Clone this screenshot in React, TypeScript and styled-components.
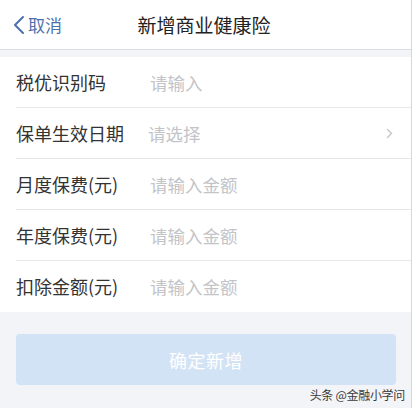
import React from "react";
import styled, { createGlobalStyle } from "styled-components";

const GlobalStyle = createGlobalStyle`
    html, body {
        margin: 0;
        padding: 0;
        background: #ffffff;
    }
    body {
        font-family: "Noto Sans CJK SC", "Noto Sans", sans-serif;
    }
`;

const Page = styled.div`
    width: 411px;
    height: 408px;
    border-right: 1px solid #d6d7db;
    background: #f3f4f8;
    display: flex;
    flex-direction: column;
    overflow: hidden;
`;

const Header = styled.div`
    height: 49px;
    flex-shrink: 0;
    background: #ffffff;
    border-bottom: 1px solid #dcdde2;
    display: grid;
    grid-template-columns: 100px 1fr 100px;
    align-items: center;
`;

const BackButton = styled.div`
    display: flex;
    align-items: center;
    gap: 3px;
    padding-left: 13px;
    color: #4a71ad;
    font-size: 17px;
`;

const Title = styled.div`
    text-align: center;
    font-size: 19px;
    color: #222222;
    margin-left: -3px;
`;

const List = styled.div`
    margin-top: 7px;
    background: #ffffff;
    display: flex;
    flex-direction: column;
`;

const Row = styled.div<{ $last?: boolean }>`
    height: 50px;
    margin-left: 16px;
    border-bottom: 1px solid ${(p) => (p.$last ? "transparent" : "#e6e7ea")};
    display: flex;
    align-items: center;
`;

const Label = styled.div<{ $width: number }>`
    width: ${(p) => p.$width}px;
    flex-shrink: 0;
    font-size: 18px;
    color: #333333;
`;

const Placeholder = styled.div`
    flex: 1;
    font-size: 17.5px;
    color: #c3c4c8;
`;

const Chevron = styled.div`
    width: 24px;
    display: flex;
    justify-content: center;
    margin-right: 10px;
`;

const Footer = styled.div`
    padding: 22px 15px 0 16px;
    display: flex;
    flex-direction: column;
`;

const SubmitButton = styled.div`
    height: 51px;
    border-radius: 4px;
    background: #d3e3f6;
    color: #ffffff;
    font-size: 18px;
    display: flex;
    align-items: center;
    justify-content: center;
    letter-spacing: 0.5px;
`;

const Watermark = styled.div`
    align-self: flex-end;
    margin-top: 1px;
    margin-right: -9px;
    font-size: 12px;
    color: #3a3a3a;
    letter-spacing: -0.3px;
`;

type Field = {
    label: string;
    placeholder: string;
    width: number;
    arrow?: boolean;
};

const fields: Field[] = [
    { label: "税优识别码", placeholder: "请输入", width: 134 },
    { label: "保单生效日期", placeholder: "请选择", width: 132, arrow: true },
    { label: "月度保费(元)", placeholder: "请输入金额", width: 134 },
    { label: "年度保费(元)", placeholder: "请输入金额", width: 134 },
    { label: "扣除金额(元)", placeholder: "请输入金额", width: 134 },
];

export default function App() {
    return (
        <>
            <GlobalStyle />
            <Page>
                <Header>
                    <BackButton>
                        <svg width="12" height="20" viewBox="0 0 12 20">
                            <path
                                d="M10 2 L2 10 L10 18"
                                fill="none"
                                stroke="#4a71ad"
                                strokeWidth="2"
                                strokeLinecap="round"
                                strokeLinejoin="round"
                            />
                        </svg>
                        取消
                    </BackButton>
                    <Title>新增商业健康险</Title>
                    <div />
                </Header>
                <List>
                    {fields.map((f, i) => (
                        <Row key={f.label} $last={i === fields.length - 1}>
                            <Label $width={f.width}>{f.label}</Label>
                            <Placeholder>{f.placeholder}</Placeholder>
                            {f.arrow ? (
                                <Chevron>
                                    <svg width="7" height="11" viewBox="0 0 7 11">
                                        <path
                                            d="M1.5 1.5 L5.5 5.5 L1.5 9.5"
                                            fill="none"
                                            stroke="#c4c5c9"
                                            strokeWidth="1.4"
                                            strokeLinecap="round"
                                        />
                                    </svg>
                                </Chevron>
                            ) : null}
                        </Row>
                    ))}
                </List>
                <Footer>
                    <SubmitButton>确定新增</SubmitButton>
                    <Watermark>头条 @金融小学问</Watermark>
                </Footer>
            </Page>
        </>
    );
}
